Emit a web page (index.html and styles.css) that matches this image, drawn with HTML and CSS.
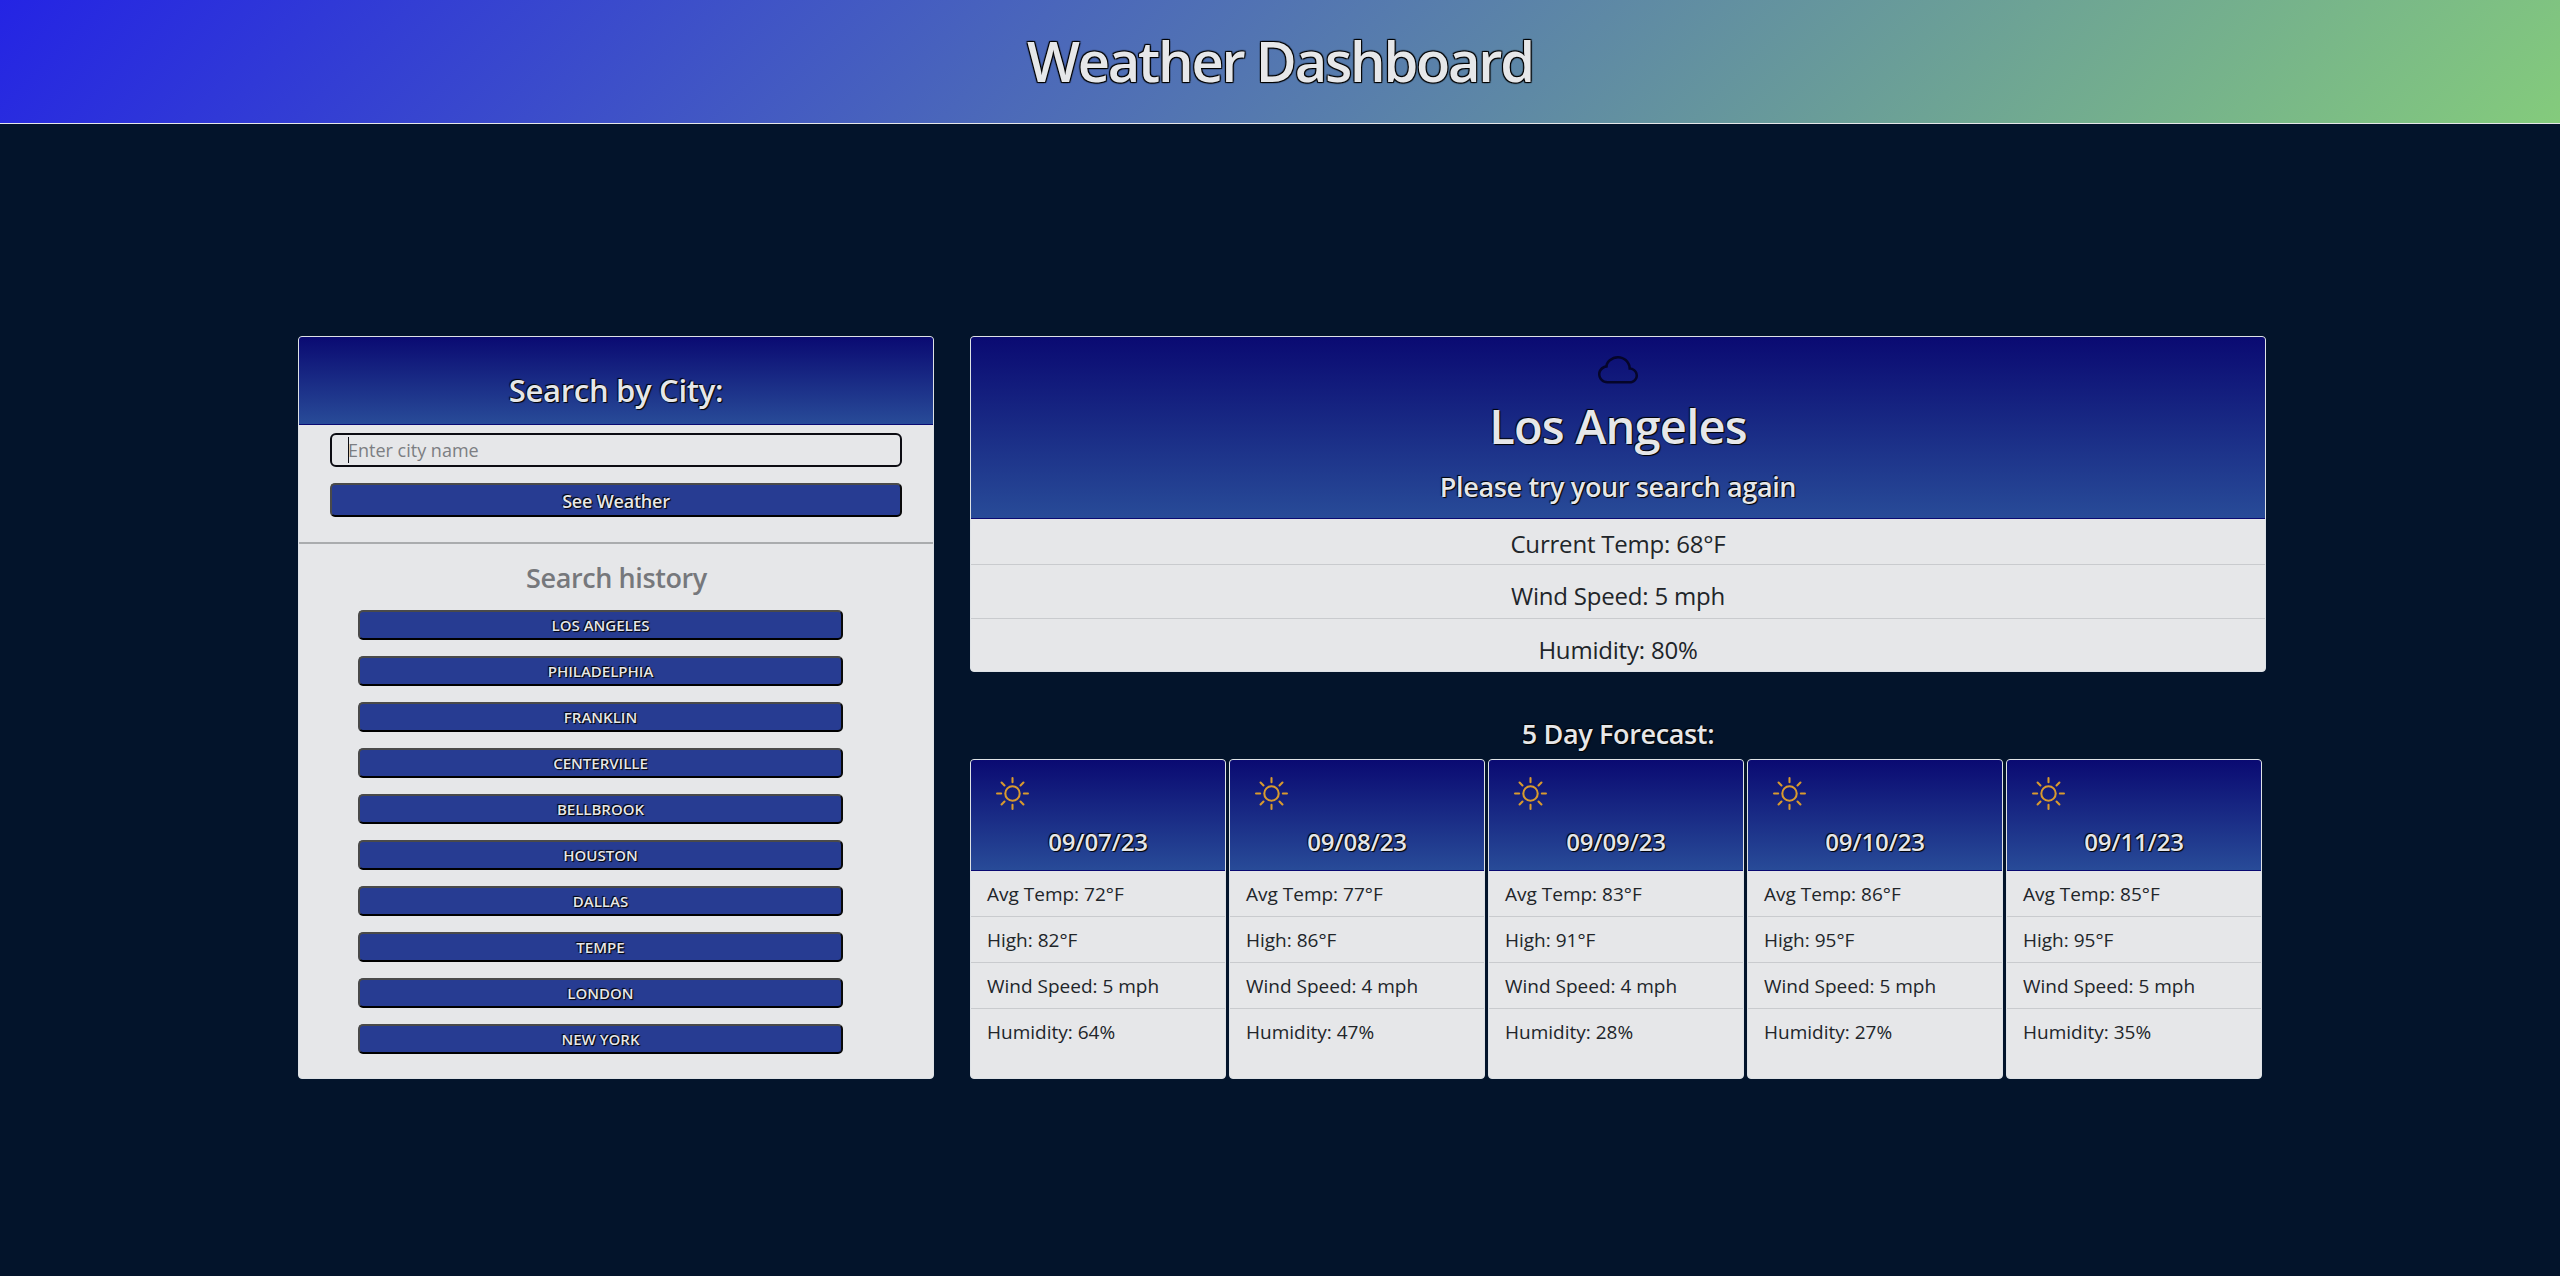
FILE: index.html
```html
<!DOCTYPE html>
<html lang="en">
<head>
    <meta charset="UTF-8">
    <meta name="viewport" content="width=device-width, initial-scale=1.0">
    <title>Weather Dashboard</title>
    <link rel="stylesheet" href="styles.css">
</head>
<body>
    <header class="top-bar">
        <h1>Weather Dashboard</h1>
    </header>

    <main class="dashboard">
        <!-- search column -->
        <section class="card search-card">
            <div class="card-head search-head">
                <h2>Search by City:</h2>
            </div>
            <form class="search-form">
                <div class="input-wrap">
                    <input type="text" class="city-input" placeholder="Enter city name">
                    <span class="caret"></span>
                </div>
                <button type="button" class="btn see-btn">See Weather</button>
            </form>
            <div class="history">
                <h3>Search history</h3>
                <button type="button" class="btn history-btn">Los Angeles</button>
                <button type="button" class="btn history-btn">Philadelphia</button>
                <button type="button" class="btn history-btn">Franklin</button>
                <button type="button" class="btn history-btn">Centerville</button>
                <button type="button" class="btn history-btn">Bellbrook</button>
                <button type="button" class="btn history-btn">Houston</button>
                <button type="button" class="btn history-btn">Dallas</button>
                <button type="button" class="btn history-btn">Tempe</button>
                <button type="button" class="btn history-btn">London</button>
                <button type="button" class="btn history-btn">New York</button>
            </div>
        </section>

        <!-- results column -->
        <div class="results">
            <section class="card current-card">
                <div class="card-head current-head">
                    <svg class="cloud-icon" viewBox="0 0 16 16" fill="currentColor"><path d="M4.406 3.342A5.53 5.53 0 0 1 8 2c2.69 0 4.923 2 5.166 4.579C14.758 6.804 16 8.137 16 9.773 16 11.569 14.502 13 12.687 13H3.781C1.708 13 0 11.366 0 9.318c0-1.763 1.266-3.223 2.942-3.593.143-.863.698-1.723 1.464-2.383zm.653.757c-.757.653-1.153 1.44-1.153 2.056v.448l-.445.049C2.064 6.805 1 7.952 1 9.318 1 10.785 2.23 12 3.781 12h8.906C13.98 12 15 10.988 15 9.773c0-1.216-1.02-2.228-2.313-2.228h-.5v-.5C12.188 4.825 10.328 3 8 3a4.53 4.53 0 0 0-2.941 1.1z"/></svg>
                    <h2 class="city-name">Los Angeles</h2>
                    <p class="city-note">Please try your search again</p>
                </div>
                <ul class="current-list">
                    <li>Current Temp: 68°F</li>
                    <li>Wind Speed: 5 mph</li>
                    <li>Humidity: 80%</li>
                </ul>
            </section>

            <h3 class="forecast-title">5 Day Forecast:</h3>
            <div class="forecast">
                <article class="card day-card">
                    <div class="card-head day-head">
                        <svg class="sun-icon" viewBox="0 0 16 16" fill="currentColor"><use href="#sun"/></svg>
                        <h4>09/07/23</h4>
                    </div>
                    <ul class="day-list">
                        <li>Avg Temp: 72°F</li>
                        <li>High: 82°F</li>
                        <li>Wind Speed: 5 mph</li>
                        <li>Humidity: 64%</li>
                    </ul>
                </article>
                <article class="card day-card">
                    <div class="card-head day-head">
                        <svg class="sun-icon" viewBox="0 0 16 16" fill="currentColor"><use href="#sun"/></svg>
                        <h4>09/08/23</h4>
                    </div>
                    <ul class="day-list">
                        <li>Avg Temp: 77°F</li>
                        <li>High: 86°F</li>
                        <li>Wind Speed: 4 mph</li>
                        <li>Humidity: 47%</li>
                    </ul>
                </article>
                <article class="card day-card">
                    <div class="card-head day-head">
                        <svg class="sun-icon" viewBox="0 0 16 16" fill="currentColor"><use href="#sun"/></svg>
                        <h4>09/09/23</h4>
                    </div>
                    <ul class="day-list">
                        <li>Avg Temp: 83°F</li>
                        <li>High: 91°F</li>
                        <li>Wind Speed: 4 mph</li>
                        <li>Humidity: 28%</li>
                    </ul>
                </article>
                <article class="card day-card">
                    <div class="card-head day-head">
                        <svg class="sun-icon" viewBox="0 0 16 16" fill="currentColor"><use href="#sun"/></svg>
                        <h4>09/10/23</h4>
                    </div>
                    <ul class="day-list">
                        <li>Avg Temp: 86°F</li>
                        <li>High: 95°F</li>
                        <li>Wind Speed: 5 mph</li>
                        <li>Humidity: 27%</li>
                    </ul>
                </article>
                <article class="card day-card">
                    <div class="card-head day-head">
                        <svg class="sun-icon" viewBox="0 0 16 16" fill="currentColor"><use href="#sun"/></svg>
                        <h4>09/11/23</h4>
                    </div>
                    <ul class="day-list">
                        <li>Avg Temp: 85°F</li>
                        <li>High: 95°F</li>
                        <li>Wind Speed: 5 mph</li>
                        <li>Humidity: 35%</li>
                    </ul>
                </article>
            </div>
        </div>
    </main>

    <svg class="icon-defs" width="0" height="0">
        <symbol id="sun" viewBox="0 0 16 16"><path d="M8 11a3 3 0 1 1 0-6 3 3 0 0 1 0 6zm0 1a4 4 0 1 0 0-8 4 4 0 0 0 0 8zM8 0a.5.5 0 0 1 .5.5v2a.5.5 0 0 1-1 0v-2A.5.5 0 0 1 8 0zm0 13a.5.5 0 0 1 .5.5v2a.5.5 0 0 1-1 0v-2A.5.5 0 0 1 8 13zm8-5a.5.5 0 0 1-.5.5h-2a.5.5 0 0 1 0-1h2a.5.5 0 0 1 .5.5zM3 8a.5.5 0 0 1-.5.5h-2a.5.5 0 0 1 0-1h2A.5.5 0 0 1 3 8zm10.657-5.657a.5.5 0 0 1 0 .707l-1.414 1.415a.5.5 0 1 1-.707-.708l1.414-1.414a.5.5 0 0 1 .707 0zm-9.193 9.193a.5.5 0 0 1 0 .707L3.05 13.657a.5.5 0 0 1-.707-.707l1.414-1.414a.5.5 0 0 1 .707 0zm9.193 2.121a.5.5 0 0 1-.707 0l-1.414-1.414a.5.5 0 0 1 .707-.707l1.414 1.414a.5.5 0 0 1 0 .707zM4.464 4.465a.5.5 0 0 1-.707 0L2.343 3.05a.5.5 0 0 1 .707-.707l1.414 1.415a.5.5 0 0 1 0 .707z"/></symbol>
    </svg>
</body>
</html>
```

FILE: styles.css
```css
* {
    box-sizing: border-box;
}
body {
    margin: 0;
    min-height: 1276px;
    font-family: "Open Sans", "Noto Sans", sans-serif;
    background-color: #03142b;
    color: #212529;
}
h1, h2, h3, h4, p, ul {
    margin: 0;
    padding: 0;
}
ul {
    list-style: none;
}
.icon-defs {
    position: absolute;
}

/* Header bar */
.top-bar {
    height: 124px;
    display: flex;
    align-items: center;
    justify-content: center;
    padding-bottom: 4px;
    background: linear-gradient(135deg, #2424e4, #84cb7c);
    border-bottom: 1px solid #e6e7e9;
}
.top-bar h1 {
    font-size: 56px;
    font-weight: 600;
    letter-spacing: -2.2px;
    color: #e6e7e9;
    text-shadow: 1px 1px 1px #000, -1px -1px 1px #000, 1px -1px 1px #000, -1px 1px 1px #000;
}

/* Layout */
.dashboard {
    display: flex;
    gap: 36px;
    padding: 212px 0 0 298px;
}
.results {
    width: 1296px;
}

/* Cards */
.card {
    background-color: #e6e7e9;
    border: 1px solid #dee2e6;
    border-radius: 4px;
    overflow: hidden;
}
.card-head {
    background: linear-gradient(#0a0a72, #284b98);
    border-bottom: 1px solid #0a0a72;
    color: #e6e7e9;
    text-shadow: 1px 1px 1px #000, -1px -1px 1px #000;
}

/* Search column */
.search-card {
    width: 636px;
    height: 743px;
}
.search-head {
    height: 88px;
    padding-top: 30px;
    text-align: center;
}
.search-head h2 {
    font-size: 31px;
    font-weight: 600;
    letter-spacing: -.3px;
    line-height: 46px;
}
.search-form {
    padding: 8px 31px 25px;
    border-bottom: 2px solid #aaacae;
}
.input-wrap {
    position: relative;
}
.city-input {
    display: block;
    width: 100%;
    height: 34px;
    padding: 0 16px;
    font-family: inherit;
    font-size: 18px;
    color: #212529;
    background-color: transparent;
    border: 2px solid #0c0c12;
    border-radius: 6px;
    outline: none;
}
.city-input::placeholder {
    color: #7c7e82;
}
.caret {
    position: absolute;
    left: 18px;
    top: 4px;
    width: 1px;
    height: 26px;
    background-color: #0c0c12;
}
.btn {
    display: block;
    font-family: inherit;
    font-weight: 600;
    color: #e6e7e9;
    background-color: #273c92;
    border-style: solid;
    border-width: 2px;
    border-color: #4a4a4a #0a0a0a #000 #4a4a4a;
    border-radius: 5px;
    text-shadow: 1px 1px 1px #000, -1px -1px 1px #000;
    cursor: pointer;
}
.see-btn {
    width: 100%;
    height: 34px;
    margin-top: 16px;
    padding: 1px 0 0;
    font-size: 18px;
    letter-spacing: -.2px;
}
.history {
    padding-left: 59px;
}
.history h3 {
    width: 517px;
    margin-bottom: 13px;
    padding-top: 15px;
    font-size: 27px;
    font-weight: 600;
    letter-spacing: -.4px;
    line-height: 38px;
    text-align: center;
    color: #76787c;
}
.history-btn {
    width: 485px;
    height: 30px;
    margin-bottom: 16px;
    padding: 0;
    font-size: 15px;
    text-transform: uppercase;
}

/* Current weather */
.current-card {
    height: 336px;
}
.current-head {
    height: 182px;
    padding-top: 14px;
    text-align: center;
}
.cloud-icon {
    display: block;
    width: 40px;
    height: 40px;
    margin: 0 auto;
    color: #05052a;
}
.city-name {
    font-size: 47px;
    font-weight: 600;
    letter-spacing: -.8px;
    line-height: 62px;
    margin-top: 4px;
}
.city-note {
    font-size: 27px;
    font-weight: 600;
    letter-spacing: -.35px;
    line-height: 36px;
    margin-top: 12px;
}
.current-list li {
    height: 54px;
    padding-top: 12px;
    font-size: 24px;
    font-weight: 500;
    letter-spacing: -.2px;
    line-height: 38px;
    text-align: center;
    border-bottom: 1px solid #c9cbce;
}
.current-list li:first-child {
    height: 46px;
    padding-top: 6px;
}
.current-list li:last-child {
    border-bottom: none;
}

/* Forecast */
.forecast-title {
    margin-top: 44px;
    height: 43px;
    font-size: 27px;
    font-weight: 600;
    letter-spacing: -.35px;
    line-height: 35px;
    text-align: center;
    color: #e6e7e9;
    text-shadow: 1px 1px 1px #000, -1px -1px 1px #000;
}
.forecast {
    display: flex;
    gap: 3px;
}
.day-card {
    width: 256px;
    height: 320px;
}
.day-head {
    height: 111px;
    padding: 17px 0 0 25px;
}
.sun-icon {
    display: block;
    width: 33px;
    height: 33px;
    color: #d99a2e;
}
.day-head h4 {
    margin: 15px 0 0 -25px;
    font-size: 24px;
    font-weight: 600;
    letter-spacing: -.2px;
    line-height: 34px;
    text-align: center;
}
.day-list li {
    height: 46px;
    padding: 9px 16px 0;
    font-size: 19px;
    font-weight: 500;
    line-height: 28px;
    border-bottom: 1px solid #c9cbce;
}
.day-list li:last-child {
    border-bottom: none;
}
```
